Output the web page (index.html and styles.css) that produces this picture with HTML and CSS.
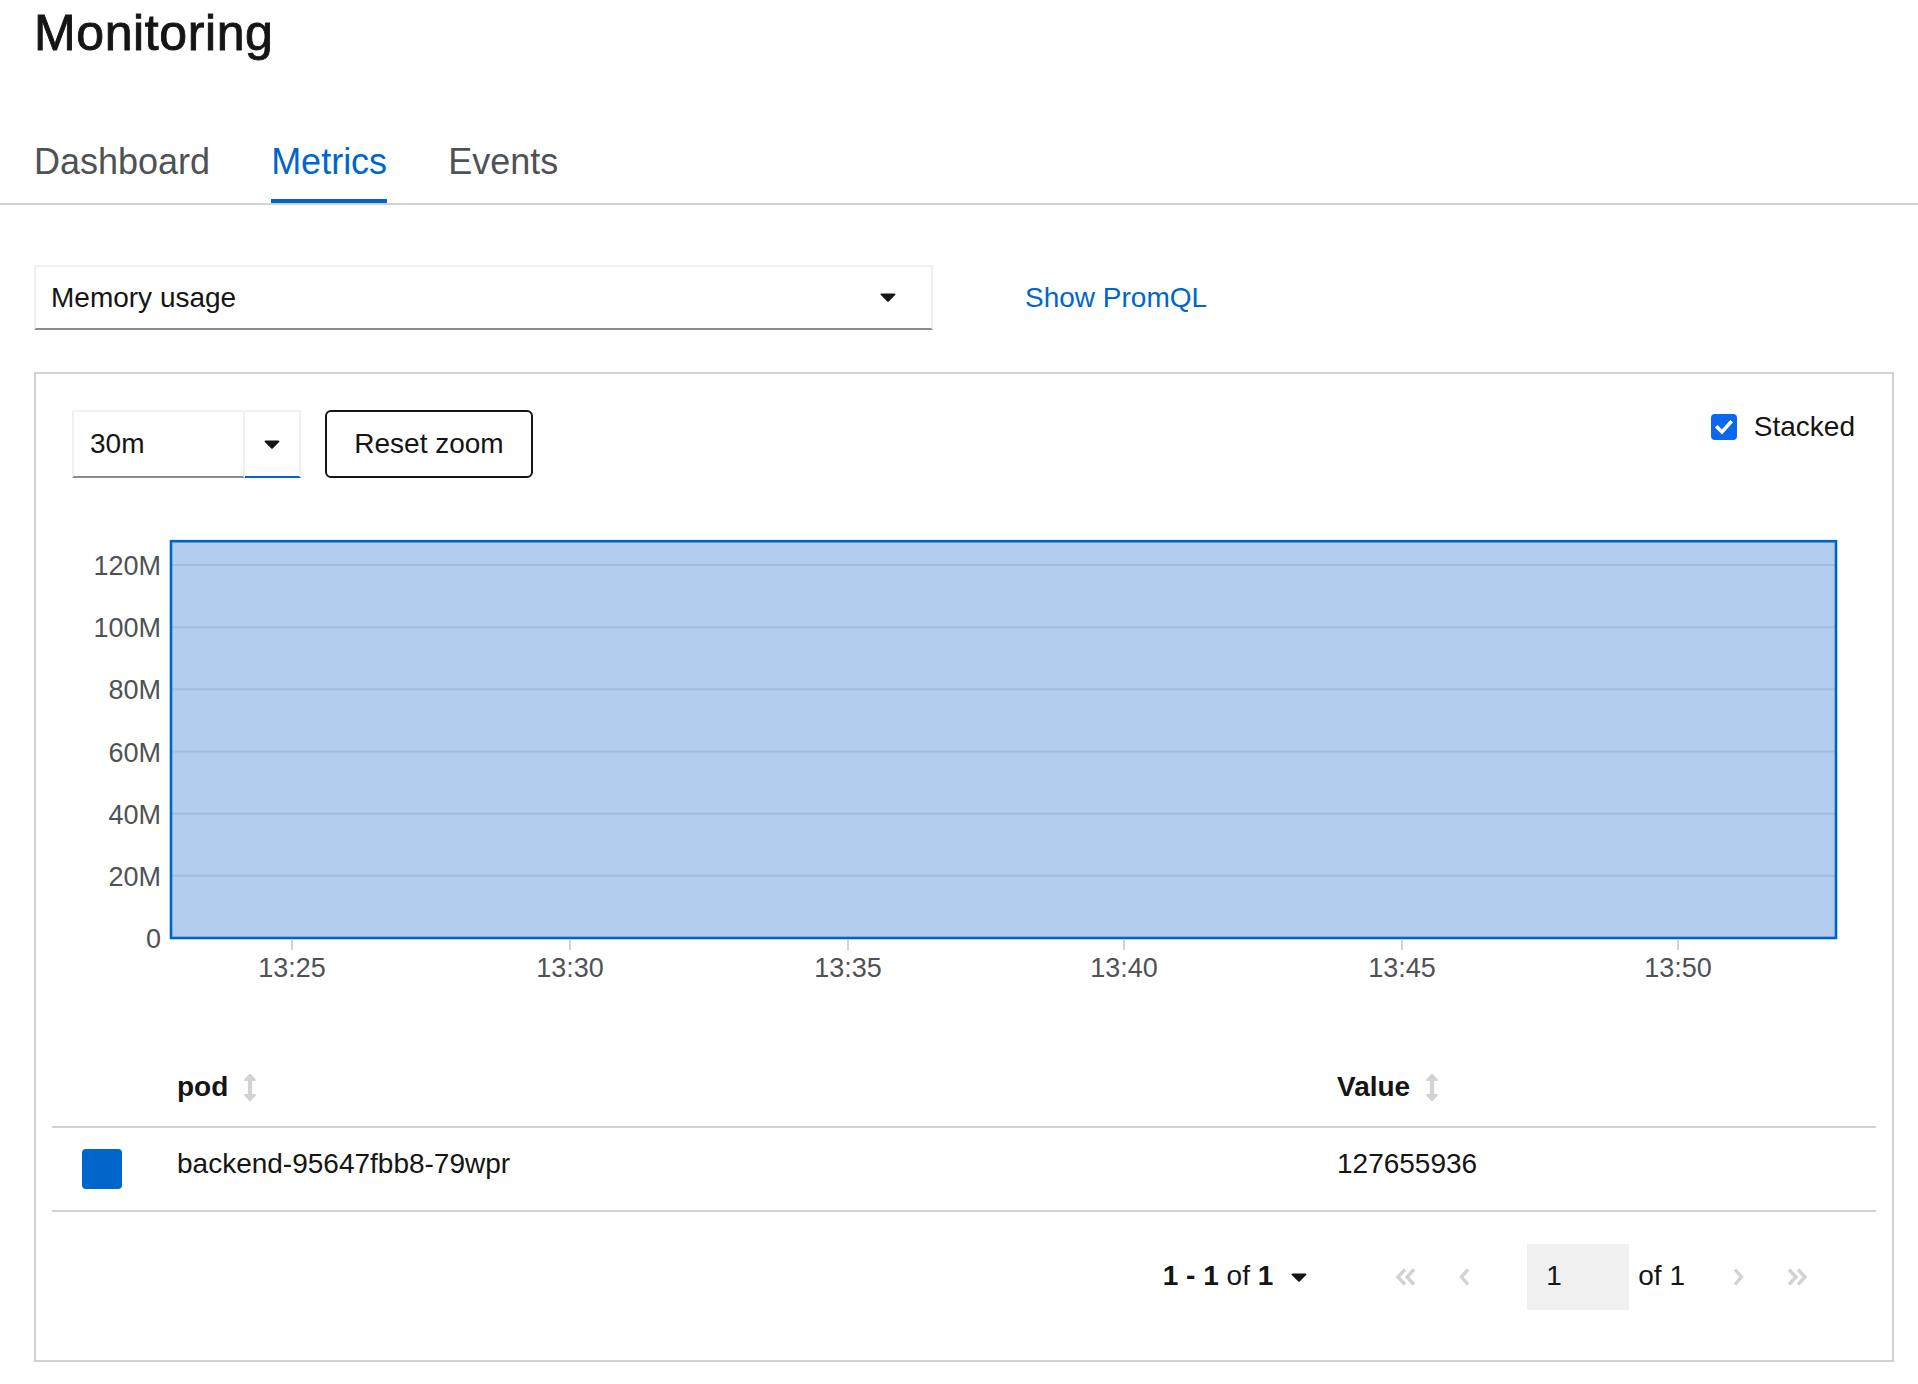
FILE: index.html
```html
<!DOCTYPE html>
<html lang="en">
<head>
<meta charset="utf-8">
<title>Monitoring</title>
<link rel="stylesheet" href="styles.css">
</head>
<body>
<header class="page-head">
  <h1 class="title">Monitoring</h1>
  <nav class="tabs">
    <a class="tab">Dashboard</a>
    <a class="tab active">Metrics</a>
    <a class="tab">Events</a>
  </nav>
</header>
<main class="content">
  <div class="query-row">
    <div class="select">
      <span>Memory usage</span>
      <svg class="caret" viewBox="0 186 320 176" width="16" height="9"><path d="M31.3 192h257.3c17.8 0 26.7 21.5 14.1 34.1L174.1 354.8c-7.8 7.8-20.5 7.8-28.3 0L17.2 226.1C4.6 213.5 13.5 192 31.3 192z"/></svg>
    </div>
    <a class="link">Show PromQL</a>
  </div>

  <section class="card">
    <div class="toolbar">
      <div class="toolbar-left">
        <div class="time-select">
          <span class="time-value">30m</span>
          <span class="time-toggle"><svg class="caret" viewBox="0 186 320 176" width="16" height="9"><path d="M31.3 192h257.3c17.8 0 26.7 21.5 14.1 34.1L174.1 354.8c-7.8 7.8-20.5 7.8-28.3 0L17.2 226.1C4.6 213.5 13.5 192 31.3 192z"/></svg></span>
        </div>
        <button class="btn">Reset zoom</button>
      </div>
      <label class="stacked">
        <span class="checkbox"><svg viewBox="0 0 26 26" width="26" height="26"><path d="M6.5 13.5 L11 18 L19.5 8.5" fill="none" stroke="#fff" stroke-width="3.6" stroke-linecap="square"/></svg></span>
        <span>Stacked</span>
      </label>
    </div>

    <svg class="chart" viewBox="0 0 1784 470" width="1784" height="470">
      <rect class="area" x="99" y="22.2" width="1665" height="396.8"/>
      <g class="grid">
        <line x1="100" x2="1763" y1="46" y2="46"/>
        <line x1="100" x2="1763" y1="108.2" y2="108.2"/>
        <line x1="100" x2="1763" y1="170.3" y2="170.3"/>
        <line x1="100" x2="1763" y1="232.5" y2="232.5"/>
        <line x1="100" x2="1763" y1="294.7" y2="294.7"/>
        <line x1="100" x2="1763" y1="356.8" y2="356.8"/>
      </g>
      <rect class="outline" x="99" y="22.2" width="1665" height="396.8"/>
      <g class="ticks">
        <line x1="220" x2="220" y1="421" y2="431"/>
        <line x1="498" x2="498" y1="421" y2="431"/>
        <line x1="776" x2="776" y1="421" y2="431"/>
        <line x1="1052" x2="1052" y1="421" y2="431"/>
        <line x1="1330" x2="1330" y1="421" y2="431"/>
        <line x1="1606" x2="1606" y1="421" y2="431"/>
      </g>
      <g class="ylabels">
        <text x="89" y="56">120M</text>
        <text x="89" y="118.2">100M</text>
        <text x="89" y="180.3">80M</text>
        <text x="89" y="242.5">60M</text>
        <text x="89" y="304.7">40M</text>
        <text x="89" y="366.8">20M</text>
        <text x="89" y="429">0</text>
      </g>
      <g class="xlabels">
        <text x="220" y="458">13:25</text>
        <text x="498" y="458">13:30</text>
        <text x="776" y="458">13:35</text>
        <text x="1052" y="458">13:40</text>
        <text x="1330" y="458">13:45</text>
        <text x="1606" y="458">13:50</text>
      </g>
    </svg>

    <div class="table">
      <div class="row head">
        <span></span>
        <span class="th">pod <svg class="sort" viewBox="0 0 256 512" width="14" height="27"><path d="M214.059 377.941H168V134.059h46.059c21.382 0 32.09-25.851 16.971-40.971L144.971 7.029c-9.373-9.373-24.568-9.373-33.941 0L24.971 93.088c-15.119 15.119-4.411 40.971 16.971 40.971H88v243.882H41.941c-21.382 0-32.090 25.851-16.971 40.971l86.059 86.059c9.373 9.373 24.568 9.373 33.941 0l86.059-86.059c15.12-15.119 4.412-40.971-16.970-40.971z"/></svg></span>
        <span class="th">Value <svg class="sort" viewBox="0 0 256 512" width="14" height="27"><path d="M214.059 377.941H168V134.059h46.059c21.382 0 32.09-25.851 16.971-40.971L144.971 7.029c-9.373-9.373-24.568-9.373-33.941 0L24.971 93.088c-15.119 15.119-4.411 40.971 16.971 40.971H88v243.882H41.941c-21.382 0-32.090 25.851-16.971 40.971l86.059 86.059c9.373 9.373 24.568 9.373 33.941 0l86.059-86.059c15.12-15.119 4.412-40.971-16.970-40.971z"/></svg></span>
      </div>
      <div class="row body">
        <span><span class="swatch"></span></span>
        <span class="td">backend-95647fbb8-79wpr</span>
        <span class="td">127655936</span>
      </div>
    </div>

    <div class="pagination">
      <div class="per-page">
        <span class="per-page-text"><b>1 - 1</b> of <b>1</b></span>
        <svg class="caret" viewBox="0 186 320 176" width="16" height="9"><path d="M31.3 192h257.3c17.8 0 26.7 21.5 14.1 34.1L174.1 354.8c-7.8 7.8-20.5 7.8-28.3 0L17.2 226.1C4.6 213.5 13.5 192 31.3 192z"/></svg>
      </div>
      <span class="pg-btn first"><svg viewBox="0 0 22 18" width="22" height="18"><path d="M10 1.5 L3 9 L10 16.5 M19 1.5 L12 9 L19 16.5"/></svg></span>
      <span class="pg-btn prev"><svg viewBox="0 0 11 18" width="11" height="18"><path d="M9 1.5 L2.5 9 L9 16.5"/></svg></span>
      <span class="pg-input">1</span>
      <span class="pg-of">of 1</span>
      <span class="pg-btn next"><svg viewBox="0 0 11 18" width="11" height="18"><path d="M2 1.5 L8.5 9 L2 16.5"/></svg></span>
      <span class="pg-btn last"><svg viewBox="0 0 22 18" width="22" height="18"><path d="M3 1.5 L10 9 L3 16.5 M12 1.5 L19 9 L12 16.5"/></svg></span>
    </div>
  </section>
</main>
</body>
</html>
```
FILE: styles.css
```css
* { box-sizing: border-box; }

body {
  margin: 0;
  background: #fff;
  color: #151515;
  font-family: "Liberation Sans", Arial, sans-serif;
  font-size: 28px;
}

.title {
  margin: 0;
  padding: 2px 34px 0;
  font-size: 50px;
  line-height: 62px;
  font-weight: 400;
  letter-spacing: 0.6px;
  color: #151515;
  -webkit-text-stroke: 0.9px #151515;
}

.tabs {
  display: flex;
  gap: 61px;
  margin-top: 56px;
  padding-left: 34px;
  border-bottom: 2px solid #d2d2d2;
}

.tab {
  font-size: 36px;
  line-height: 44px;
  padding: 20px 0 15px;
  border-bottom: 4px solid transparent;
  color: #4f5255;
}

.tab.active {
  color: #0066cc;
  border-bottom-color: #0066cc;
}

.content {
  padding: 0 24px 0 34px;
}

.query-row {
  display: flex;
  align-items: center;
  margin-top: 60px;
}

.select {
  width: 899px;
  height: 65px;
  border: 2px solid #f0f0f0;
  border-bottom-color: #8a8d90;
  padding: 0 35px 0 15px;
  display: flex;
  align-items: center;
  justify-content: space-between;
  font-size: 28px;
}

.caret { fill: #151515; display: block; }

.link {
  margin-left: 92px;
  color: #0066cc;
  font-size: 28px;
}

.card {
  margin-top: 42px;
  border: 2px solid #d2d2d2;
  padding: 36px 36px 50px;
}

.toolbar {
  display: flex;
  justify-content: space-between;
  align-items: flex-start;
}

.toolbar-left {
  display: flex;
  gap: 24px;
}

.time-select {
  display: flex;
  height: 68px;
}

.time-value {
  width: 173px;
  border: 2px solid #f0f0f0;
  border-bottom-color: #8a8d90;
  padding-left: 16px;
  display: flex;
  align-items: center;
}

.time-toggle {
  width: 56px;
  border: 2px solid #f0f0f0;
  border-left: none;
  border-bottom-color: #0066cc;
  display: flex;
  align-items: center;
  justify-content: center;
}

.btn {
  width: 208px;
  height: 68px;
  border: 2px solid #151515;
  border-radius: 6px;
  background: #fff;
  color: #151515;
  font-family: inherit;
  font-size: 28px;
  padding: 0;
}

.stacked {
  display: flex;
  align-items: center;
  gap: 17px;
  height: 34px;
  font-size: 28px;
  margin-right: 1px;
}

.checkbox {
  width: 26px;
  height: 26px;
  border-radius: 4px;
  background: #0b66f0;
  display: block;
}
.checkbox svg { display: block; }

.chart {
  display: block;
  margin-top: 41px;
}

.chart .area { fill: #b2cdee; }
.chart .grid line { stroke: #a2bde0; stroke-width: 2; }
.chart .outline { fill: none; stroke: #0063c8; stroke-width: 2.6; }
.chart .ticks line { stroke: #d2d2d2; stroke-width: 2; }
.chart text {
  font-family: "Liberation Sans", Arial, sans-serif;
  font-size: 27px;
  fill: #4f5255;
}
.chart .ylabels text { text-anchor: end; }
.chart .xlabels text { text-anchor: middle; }

.table {
  margin: 59px -20px 0;
}

.row {
  display: grid;
  grid-template-columns: 125px 1160px 1fr;
  border-bottom: 2px solid #d2d2d2;
}

.row.head {
  padding: 19px 0;
  line-height: 40px;
  font-weight: 700;
}

.th {
  display: flex;
  align-items: center;
}

.sort {
  fill: #d2d2d2;
  margin-left: 15px;
}

.row.body {
  height: 84px;
  align-items: center;
}

.td {
  padding-bottom: 11px;
}

.swatch {
  display: block;
  width: 40px;
  height: 40px;
  margin-left: 30px;
  border-radius: 4px;
  background: #0066cc;
}

.pagination {
  display: flex;
  align-items: center;
  justify-content: flex-end;
  margin-top: 32px;
  height: 66px;
  padding-right: 33px;
  font-size: 28px;
}

.per-page {
  display: flex;
  align-items: center;
  margin-right: 73px;
  padding-bottom: 3px;
}
.per-page-text { white-space: nowrap; }
.per-page .caret { margin-left: 18px; margin-top: 3px; }

.pg-btn {
  width: 52px;
  height: 66px;
  display: flex;
  align-items: center;
  justify-content: center;
}
.pg-btn svg path {
  fill: none;
  stroke: #d2d2d2;
  stroke-width: 3.4;
}

.pg-btn.prev { margin-left: 6px; }

.pg-input {
  width: 102px;
  height: 66px;
  margin-left: 37px;
  background: #f0f0f0;
  padding-left: 19px;
  padding-bottom: 3px;
  display: flex;
  align-items: center;
}

.pg-of {
  white-space: nowrap;
  margin-left: 9px;
  padding-bottom: 3px;
}

.pg-btn.next { margin-left: 27px; }
.pg-btn.last { margin-left: 7px; }
```
